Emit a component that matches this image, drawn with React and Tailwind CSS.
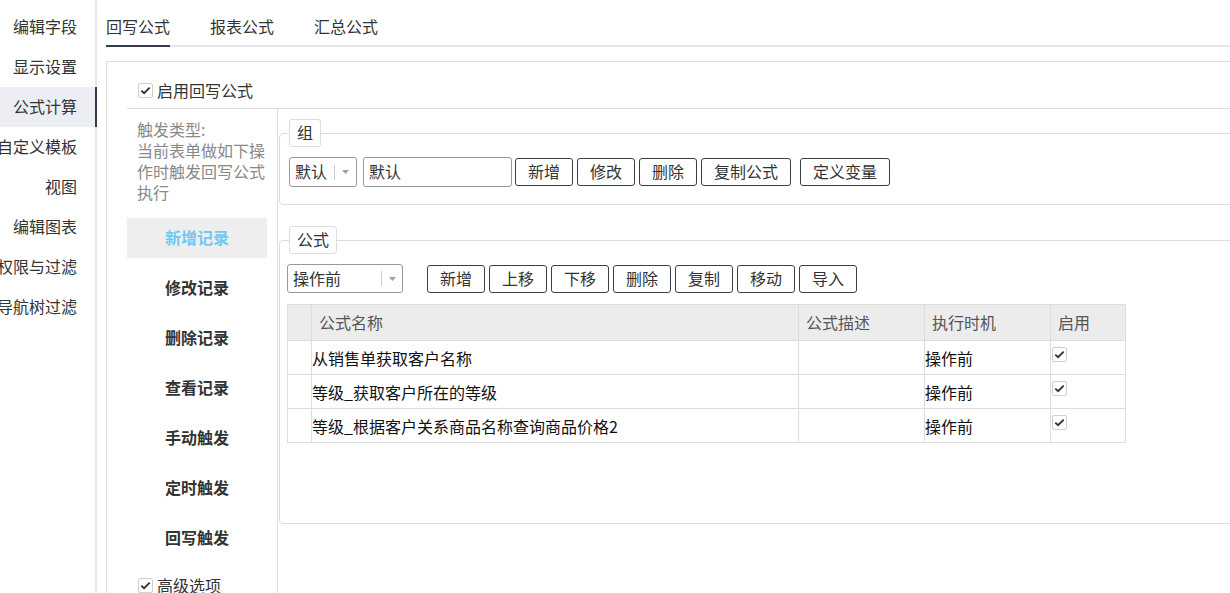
import React from 'react';

const sideItems = ['编辑字段', '显示设置', '公式计算', '自定义模板', '视图', '编辑图表', '权限与过滤', '导航树过滤'];
const triggers = ['新增记录', '修改记录', '删除记录', '查看记录', '手动触发', '定时触发', '回写触发'];
const rows = ['从销售单获取客户名称', '等级_获取客户所在的等级', '等级_根据客户关系商品名称查询商品价格2'];

function CheckBox() {
  return (
    <span className="inline-flex w-[15px] h-[15px] shrink-0 items-center justify-center rounded-[2px] border border-[#d0d0d0] bg-white">
      <svg width="11" height="11" viewBox="0 0 11 11">
        <path d="M1.3 5.6 4.1 8.2 9.7 2.6" fill="none" stroke="#333" strokeWidth="1.9" />
      </svg>
    </span>
  );
}

function Arrow() {
  return (
    <svg width="7" height="4" viewBox="0 0 7 4">
      <path d="M0 0H7L3.5 4Z" fill="#a0a0a0" />
    </svg>
  );
}

function Btn({ children, className = '' }) {
  return (
    <button className={'h-[28px] px-[12px] pb-[2px] border border-[#3c3f4a] rounded-[3px] bg-white text-[16px] leading-none text-[#333] ' + className}>
      {children}
    </button>
  );
}

export default function App() {
  return (
    <div className="w-[1230px] h-[593px] overflow-hidden bg-white flex font-['Noto_Sans_CJK_SC','Microsoft_YaHei',sans-serif] text-[#333]">
      <aside className="w-[97px] shrink-0 h-full border-r-2 border-[#e4e7ee] pt-[7px]">
        {sideItems.map((item) => (
          <div
            key={item}
            className={
              item === '公式计算'
                ? 'h-10 w-[97px] flex items-center justify-end pr-[18px] pb-[2px] text-[16px] whitespace-nowrap bg-[#eceef4] border-r-2 border-[#333a4a]'
                : 'h-10 w-[95px] flex items-center justify-end pr-[18px] pb-[2px] text-[16px] whitespace-nowrap'
            }
          >
            {item}
          </div>
        ))}
      </aside>

      <main className="flex-1 min-w-0 pl-[9px]">
        <div className="flex gap-10 border-b-2 border-[#e4e8ee] pt-[16px] text-[16px] leading-[20px]">
          <div className="pb-[9px] -mb-[2px] border-b-2 border-[#333a4a]">回写公式</div>
          <div className="pb-[9px]">报表公式</div>
          <div className="pb-[9px]">汇总公式</div>
        </div>

        <div className="mt-[14px] w-[1200px] h-[600px] border border-[#ddd] pl-[20px]">
          <div className="h-[47px] border-b border-[#ddd] pt-[21px] pl-[11px] flex items-start gap-[4px]">
            <CheckBox />
            <span className="text-[16px] leading-[14px]">启用回写公式</span>
          </div>

          <div className="flex h-full">
            <div className="w-[151px] shrink-0 border-r border-[#ddd]">
              <div className="pt-[10px] px-[10px] text-[16px] leading-[21px] text-[#888]">
                触发类型:<br />
                当前表单做如下操作时触发回写公式执行
              </div>
              <div className="mt-[15px] flex flex-col gap-[10px]">
                {triggers.map((t, i) => (
                  <div
                    key={t}
                    className={
                      i === 0
                        ? 'w-[140px] h-10 pb-[2px] flex items-center justify-center text-[16px] font-bold bg-[#eeeeee] text-[#72c8f3]'
                        : 'w-[140px] h-10 pb-[2px] flex items-center justify-center text-[16px] font-bold text-[#333]'
                    }
                  >
                    {t}
                  </div>
                ))}
              </div>
              <div className="mt-[20px] pl-[11px] flex items-start gap-[4px]">
                <CheckBox />
                <span className="text-[16px] leading-[14px]">高级选项</span>
              </div>
            </div>

            <div className="flex-1 min-w-0">
              <fieldset className="ml-[1px] mt-[10px] border border-[#ddd] rounded-[4px] px-[9px] pt-[10px] pb-[17px] min-w-0">
                <legend className="border border-[#ddd] rounded-[3px] px-[7px] h-[28px] leading-[24px] text-[16px]">组</legend>
                <div className="flex items-center">
                  <div className="w-[68px] h-[30px] flex items-center border border-[#999] rounded-[3px] bg-white">
                    <span className="flex-1 pl-[5px] pb-[2px] text-[16px] leading-none">默认</span>
                    <span className="w-px h-[15px] bg-[#ccc]" />
                    <span className="w-[21px] flex justify-center"><Arrow /></span>
                  </div>
                  <div className="ml-[6px] w-[149px] h-[30px] flex items-center border border-[#999] rounded-[3px] pl-[5px] pb-[2px] text-[16px] leading-none">默认</div>
                  <div className="ml-[3px] flex items-center gap-[4px]">
                    <Btn>新增</Btn>
                    <Btn>修改</Btn>
                    <Btn>删除</Btn>
                    <Btn>复制公式</Btn>
                    <Btn className="ml-[5px]">定义变量</Btn>
                  </div>
                </div>
              </fieldset>

              <fieldset className="ml-[1px] mt-[21px] border border-[#ddd] rounded-[4px] px-[7px] pt-[10px] pb-[80px] min-w-0">
                <legend className="ml-[2px] border border-[#ddd] rounded-[3px] px-[7px] h-[28px] leading-[24px] text-[16px]">公式</legend>
                <div className="flex items-end">
                  <div className="w-[116px] h-[29px] flex items-center border border-[#999] rounded-[3px] bg-white">
                    <span className="flex-1 pl-[5px] pb-[2px] text-[16px] leading-none">操作前</span>
                    <span className="w-px h-[15px] bg-[#ccc]" />
                    <span className="w-[20px] flex justify-center"><Arrow /></span>
                  </div>
                  <div className="ml-[24px] flex items-center gap-[4px]">
                    <Btn className="h-[27px]">新增</Btn>
                    <Btn className="h-[27px]">上移</Btn>
                    <Btn className="h-[27px]">下移</Btn>
                    <Btn className="h-[27px]">删除</Btn>
                    <Btn className="h-[27px]">复制</Btn>
                    <Btn className="h-[27px]">移动</Btn>
                    <Btn className="h-[27px]">导入</Btn>
                  </div>
                </div>

                <div className="mt-[11px] w-[839px] grid grid-cols-[24px_487px_126px_126px_75px] border-l border-t border-[#ddd] text-[16px]">
                  <div className="h-[36px] bg-[#ececec] border-r border-b border-[#ddd]" />
                  <div className="h-[36px] bg-[#ececec] border-r border-b border-[#ddd] pl-[7px] pb-[2px] flex items-center text-[#555]">公式名称</div>
                  <div className="h-[36px] bg-[#ececec] border-r border-b border-[#ddd] pl-[7px] pb-[2px] flex items-center text-[#555]">公式描述</div>
                  <div className="h-[36px] bg-[#ececec] border-r border-b border-[#ddd] pl-[7px] pb-[2px] flex items-center text-[#555]">执行时机</div>
                  <div className="h-[36px] bg-[#ececec] border-r border-b border-[#ddd] pl-[7px] pb-[2px] flex items-center text-[#555]">启用</div>
                  {rows.map((r) => (
                    <React.Fragment key={r}>
                      <div className="h-[34px] border-r border-b border-[#ddd]" />
                      <div className="h-[34px] border-r border-b border-[#ddd] flex items-center text-[#111] whitespace-nowrap">{r}</div>
                      <div className="h-[34px] border-r border-b border-[#ddd]" />
                      <div className="h-[34px] border-r border-b border-[#ddd] flex items-center text-[#111]">操作前</div>
                      <div className="h-[34px] border-r border-b border-[#ddd] pt-[6px] pl-[1px] flex items-start">
                        <CheckBox />
                      </div>
                    </React.Fragment>
                  ))}
                </div>
              </fieldset>
            </div>
          </div>
        </div>
      </main>
    </div>
  );
}
